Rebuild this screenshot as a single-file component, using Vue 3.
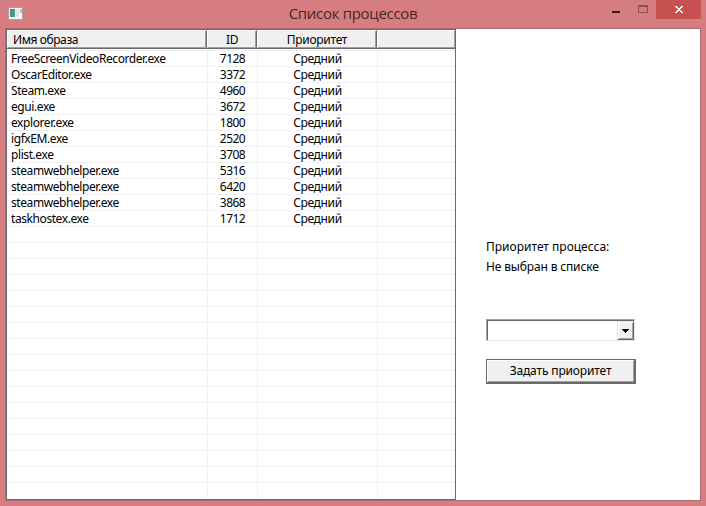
<script setup>
const processes = [
  ['FreeScreenVideoRecorder.exe', 7128],
  ['OscarEditor.exe', 3372],
  ['Steam.exe', 4960],
  ['egui.exe', 3672],
  ['explorer.exe', 1800],
  ['igfxEM.exe', 2520],
  ['plist.exe', 3708],
  ['steamwebhelper.exe', 5316],
  ['steamwebhelper.exe', 6420],
  ['steamwebhelper.exe', 3868],
  ['taskhostex.exe', 1712],
]
const rows = Array.from({ length: 28 }, (_, i) => processes[i] || null)
</script>

<template>
  <div class="window">
    <header class="titlebar">
      <svg class="app-icon" width="15" height="13" viewBox="0 0 15 13">
        <defs>
          <linearGradient id="pane" x1="0" y1="0" x2="1" y2="1">
            <stop offset="0" stop-color="#4c7fa0" />
            <stop offset="1" stop-color="#55a678" />
          </linearGradient>
        </defs>
        <rect x="0.5" y="0.5" width="14" height="12" fill="#f6f6f4" stroke="#b5979c" />
        <rect x="2" y="2" width="5" height="8" fill="url(#pane)" />
        <rect x="8" y="2" width="3" height="8" fill="#e2e5e3" />
        <rect x="12" y="2" width="2" height="4" fill="#a9cabd" />
      </svg>
      <h1 class="title">Список процессов</h1>
      <div class="controls">
        <svg class="glyph" width="44" height="19" viewBox="0 0 44 19" shape-rendering="crispEdges">
          <rect x="0" y="11" width="8" height="2" fill="#42171c" />
          <path d="M26 5h10v8H26zM27 7v5h8V7z" fill="#8d5055" fill-rule="evenodd" />
        </svg>
        <button class="close" aria-label="Закрыть">
          <svg width="8" height="7" viewBox="0 0 8 7" shape-rendering="crispEdges">
            <path d="M0 0h2v1h1v1h2V1h1V0h2v1H7v1H6v1H5v1h1v1h1v1h1v1H6V6H5V5H3v1H2v1H0V6h1V5h1V4h1V3H2V2H1V1H0z" fill="#fff" />
          </svg>
        </button>
      </div>
    </header>
    <main class="client">
      <section class="list">
        <div class="row head">
          <div class="th name"><span>Имя образа</span></div>
          <div class="th"><span>ID</span></div>
          <div class="th"><span>Приоритет</span></div>
          <div class="th last"></div>
        </div>
        <div class="body">
          <div v-for="(p, i) in rows" :key="i" class="row">
            <div class="td name"><span v-if="p">{{ p[0] }}</span></div>
            <div class="td id"><span v-if="p">{{ p[1] }}</span></div>
            <div class="td prio"><span v-if="p">Средний</span></div>
            <div class="td"></div>
          </div>
        </div>
      </section>
      <section class="panel">
        <p class="label caption">Приоритет процесса:</p>
        <p class="label status">Не выбран в списке</p>
        <div class="combo">
          <div class="drop">
            <svg width="7" height="4" viewBox="0 0 7 4" shape-rendering="crispEdges">
              <path d="M0 0h7v1H6v1H5v1H4v1H3V3H2V2H1V1H0z" fill="#000" />
            </svg>
          </div>
        </div>
        <button class="apply"><span>Задать приоритет</span></button>
      </section>
    </main>
  </div>
</template>

<style>
body { margin: 0; background: #d67d82; overflow: hidden; }
</style>

<style scoped>
* { box-sizing: border-box; }
.window { width: 706px; height: 506px; padding: 0 5px 5px; background: #d67d82; font: 12px/16px "Noto Sans", sans-serif; color: #000; }
.titlebar { display: grid; grid-template-columns: 90px 1fr 90px; height: 28px; align-items: start; }
.app-icon { margin: 7px 0 0 3px; }
.title { margin: 2px 0 0; text-align: center; font: 400 15px/22px "Open Sans", sans-serif; color: #46262a; letter-spacing: -0.3px; }
.controls { display: flex; justify-content: flex-end; }
.glyph { flex: none; }
.close { flex: none; width: 45px; height: 19px; padding: 0; border: 0; background: #c75050; display: flex; align-items: center; justify-content: center; }
.client { display: flex; width: 696px; height: 473px; border: 1px solid #ab6d72; background: #fff; }
.list { width: 450px; height: 471px; border: 1px solid #696969; overflow: hidden; }
.row { display: grid; grid-template-columns: 200px 50px 120px 78px; height: 16px; }
.head { height: 19px; border-bottom: 1px solid #696969; }
.th { display: flex; justify-content: center; align-items: center; height: 18px; background: #f0f0f0; border: 1px solid #fff; border-right: 1px solid #696969; border-bottom: 1px solid #a0a0a0; box-shadow: inset -1px 0 #a0a0a0; letter-spacing: -0.3px; line-height: 14px; padding-top: 2px; }
.th.name { justify-content: flex-start; padding-left: 5px; letter-spacing: -0.4px; }
.th.last { border-right-color: #a0a0a0; box-shadow: none; }
.body { padding-top: 1px; }
.td { border-top: 1px solid #f0f0f0; white-space: nowrap; line-height: 15px; text-align: center; height: 16px; }
.td + .td { border-left: 1px solid #f0f0f0; }
.td.name { text-align: left; padding-left: 4px; letter-spacing: -0.42px; }
.td.id { letter-spacing: -0.5px; }
.td.prio { letter-spacing: -0.35px; }
.panel { flex: 1; padding-left: 30px; }
.label { margin: 0; white-space: nowrap; line-height: 20px; }
.caption { margin-top: 208px; }
.status { letter-spacing: -0.15px; }
.combo { display: flex; justify-content: flex-end; width: 149px; height: 22px; margin-top: 42px; border: 1px solid #a0a0a0; border-right-color: #e3e3e3; border-bottom-color: #e3e3e3; box-shadow: inset 1px 1px #696969; padding: 1px 0 0 1px; }
.drop { width: 17px; height: 19px; background: #f0f0f0; border: 1px solid #e3e3e3; border-right-color: #696969; border-bottom-color: #696969; box-shadow: inset 1px 1px #fff, inset -1px -1px #a0a0a0; display: flex; align-items: center; justify-content: center; }
.apply { display: flex; align-items: center; justify-content: center; width: 150px; height: 25px; margin-top: 18px; padding: 0; font: inherit; letter-spacing: -0.15px; color: #000; background: #f0f0f0; border: 1px solid #696969; border-right-width: 2px; border-bottom-width: 2px; box-shadow: inset 1px 1px #fff, inset -1px -1px #a0a0a0; }
</style>
